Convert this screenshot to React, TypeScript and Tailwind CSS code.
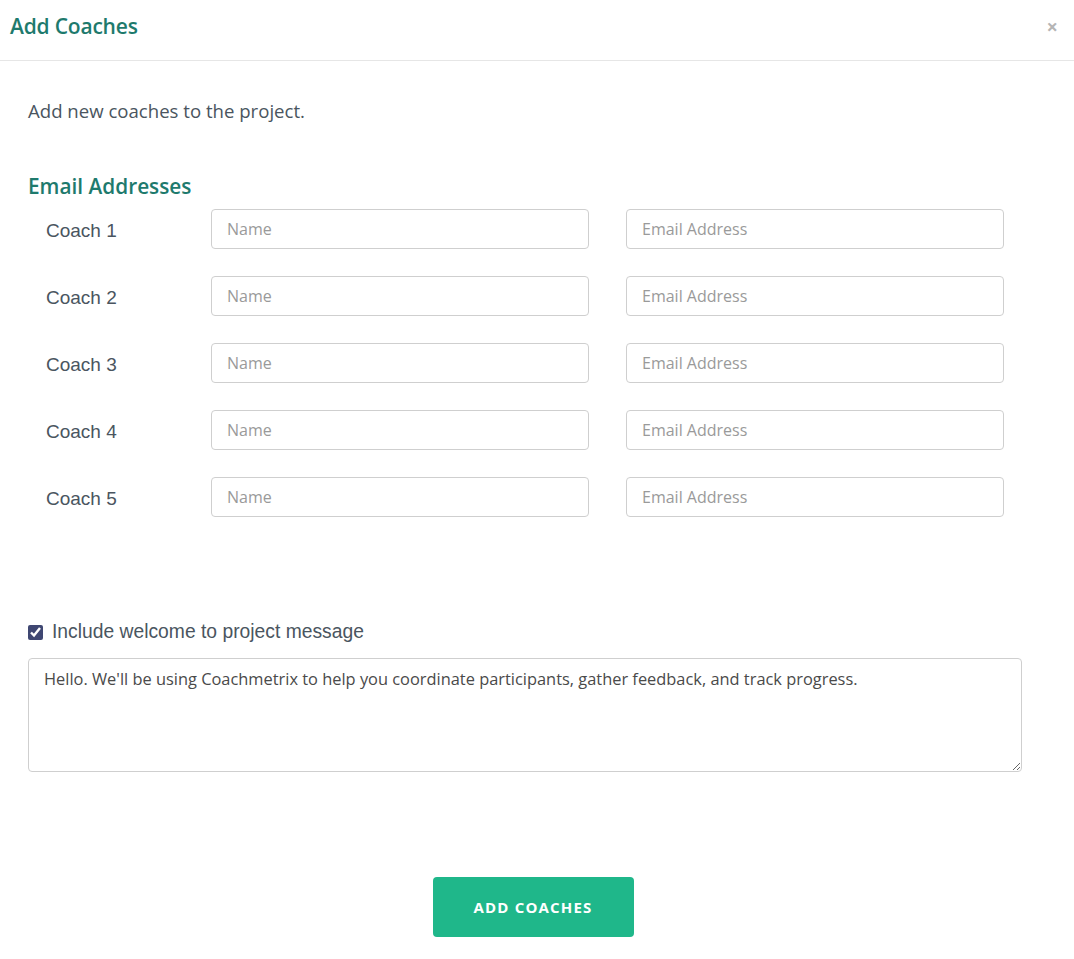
import { useState } from 'react'

const coaches = [1, 2, 3, 4, 5]

export default function App() {
  const [welcome, setWelcome] = useState(true)

  return (
    <div className="min-h-[959px] w-full bg-white text-[#4a5560] font-['Open_Sans',sans-serif]">
      {/* modal header */}
      <div className="flex h-[61px] items-center justify-between border-b border-[#e6e6e6] pb-[7px] pl-[10px] pr-[16px]">
        <h2 className="text-[21px] font-semibold text-[#1e7a6d] tracking-[-0.2px]">Add Coaches</h2>
        <button className="text-[20px] font-bold leading-none text-[#b5b5b5]">×</button>
      </div>

      <div className="px-[28px]">
        <p className="pt-[38px] text-[18.6px] leading-[24px]">Add new coaches to the project.</p>

        <h3 className="mt-[50px] text-[20.8px] font-semibold leading-[26px] text-[#1e7a6d]">Email Addresses</h3>

        <div className="mt-[10px] flex flex-col gap-[27px]">
          {coaches.map((n) => (
            <div key={n} className="flex items-center">
              <label className="w-[183px] pl-[18px] pt-[4px] font-['Liberation_Sans',Arial,sans-serif] text-[19px] text-[#4a5560]">
                Coach {n}
              </label>
              <input
                placeholder="Name"
                className="h-[40px] w-[378px] rounded-[4px] border border-[#cfcfcf] px-[15px] text-[16px] placeholder:text-[#9a9a9a] outline-none"
              />
              <input
                placeholder="Email Address"
                className="ml-[37px] h-[40px] w-[378px] rounded-[4px] border border-[#cfcfcf] px-[15px] text-[16px] placeholder:text-[#9a9a9a] outline-none"
              />
            </div>
          ))}
        </div>

        <label className="mt-[101px] flex items-center gap-[9px] font-['Liberation_Sans',Arial,sans-serif] text-[19.3px] text-[#4a5560]">
          <input
            type="checkbox"
            checked={welcome}
            onChange={(e) => setWelcome(e.target.checked)}
            className="h-[15px] w-[15px] accent-[#3f4772]"
          />
          Include welcome to project message
        </label>

        <textarea
          className="mt-[11px] block h-[114px] w-[994px] rounded-[4px] border border-[#cfcfcf] px-[15px] py-[9px] text-[16.4px] leading-[22px] text-[#4a4a4a] outline-none"
          defaultValue="Hello. We'll be using Coachmetrix to help you coordinate participants, gather feedback, and track progress."
        />

        <div className="flex justify-center pt-[105px] pr-[8px]">
          <button className="h-[60px] w-[201px] rounded-[4px] bg-[#1fb78a] text-[15px] font-bold tracking-[1.2px] text-white">
            ADD COACHES
          </button>
        </div>
      </div>
    </div>
  )
}
